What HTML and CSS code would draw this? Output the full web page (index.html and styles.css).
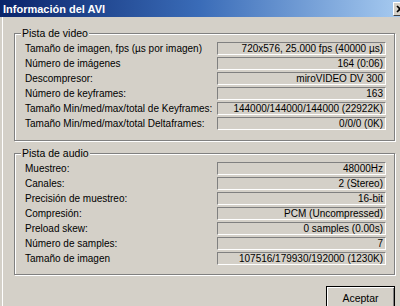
FILE: index.html
```html
<!DOCTYPE html>
<html lang="es">
<head>
  <meta charset="UTF-8" />
  <title>Información del AVI</title>
  <link rel="stylesheet" href="styles.css">
</head>
<body>

  <div class="window">
    <div class="titlebar">
      <span class="title">Información del AVI</span>
      <span class="close">
        <svg width="8" height="8" viewBox="0 0 8 8"><path d="M1 1 L7 7 M7 1 L1 7" stroke="#000" stroke-width="1.6"/></svg>
      </span>
    </div>

    <div class="client">
      <div class="group">
        <span class="group-title">Pista de video</span>
        <div class="rows">
          <span class="label">Tamaño de imagen, fps (µs por imagen)</span>
          <span class="value">720x576, 25.000 fps (40000 µs)</span>
          <span class="label">Número de imágenes</span>
          <span class="value">164 (0:06)</span>
          <span class="label">Descompresor:</span>
          <span class="value">miroVIDEO DV 300</span>
          <span class="label">Número de keyframes:</span>
          <span class="value">163</span>
          <span class="label">Tamaño Min/med/max/total de Keyframes:</span>
          <span class="value">144000/144000/144000 (22922K)</span>
          <span class="label">Tamaño Min/med/max/total Deltaframes:</span>
          <span class="value">0/0/0 (0K)</span>
        </div>
      </div>

      <div class="group audio">
        <span class="group-title">Pista de audio</span>
        <div class="rows">
          <span class="label">Muestreo:</span>
          <span class="value">48000Hz</span>
          <span class="label">Canales:</span>
          <span class="value">2 (Stereo)</span>
          <span class="label">Precisión de muestreo:</span>
          <span class="value">16-bit</span>
          <span class="label">Compresión:</span>
          <span class="value">PCM (Uncompressed)</span>
          <span class="label">Preload skew:</span>
          <span class="value">0 samples (0.00s)</span>
          <span class="label">Número de samples:</span>
          <span class="value">7</span>
          <span class="label">Tamaño de imagen</span>
          <span class="value">107516/179930/192000 (1230K)</span>
        </div>
      </div>

      <div class="actions">
        <button class="btn">Aceptar</button>
      </div>
    </div>
  </div>

</body>
</html>
```

FILE: styles.css
```css
* {
  margin: 0;
  padding: 0;
  box-sizing: border-box;
}

body {
  width: 400px;
  height: 306px;
  overflow: hidden;
  background: #d4d0c8;
  font-family: "Liberation Sans", Arial, sans-serif;
  font-size: 10px;
  color: #000;
}

.titlebar {
  height: 17px;
  display: flex;
  align-items: center;
  justify-content: space-between;
  padding-left: 3px;
  background: linear-gradient(to right, #0a246a 0%, #3a6cb8 50%, #a6caf0 100%);
}

.title {
  color: #fff;
  font-weight: bold;
  font-size: 11px;
}

.close {
  display: flex;
  align-items: center;
  width: 16px;
  height: 14px;
  margin-right: -9px;
  padding-left: 2px;
  background: #d4d0c8;
  border-top: 1px solid #fff;
  border-left: 1px solid #fff;
  border-bottom: 1px solid #404040;
  border-right: 1px solid #404040;
}

.client {
  height: 289px;
  margin-left: 2px;
  border-left: 1px solid #fff;
  padding-top: 16px;
}

.group {
  position: relative;
  margin-left: 11px;
  margin-right: 5px;
  border: 1px solid #808080;
  box-shadow: inset 1px 1px #fff, 1px 1px #fff;
}

.group.audio {
  margin-top: 12px;
}

.group-title {
  position: absolute;
  top: -7px;
  left: 6px;
  padding: 0 1px;
  background: #d4d0c8;
  line-height: 13px;
  font-size: 10.5px;
}

.rows {
  display: grid;
  grid-template-columns: minmax(0, 1fr) 169px;
  row-gap: 2px;
  align-items: center;
  padding: 8px 8px 10px 10px;
}

.audio .rows {
  padding-bottom: 9px;
}

.label {
  white-space: nowrap;
  line-height: 13px;
}

.value {
  height: 13px;
  line-height: 11px;
  text-align: right;
  white-space: nowrap;
  padding-right: 2px;
  border-top: 1px solid #808080;
  border-left: 1px solid #808080;
  border-bottom: 1px solid #fff;
  border-right: 1px solid #fff;
}

.actions {
  display: flex;
  justify-content: flex-end;
  margin-top: 11px;
  margin-right: 5px;
}

.btn {
  width: 69px;
  height: 23px;
  font-family: inherit;
  font-size: 10.5px;
  color: #000;
  background: #d4d0c8;
  border: 1px solid #000;
  box-shadow: inset 1px 1px #fff, inset -1px -1px #808080;
}
```
